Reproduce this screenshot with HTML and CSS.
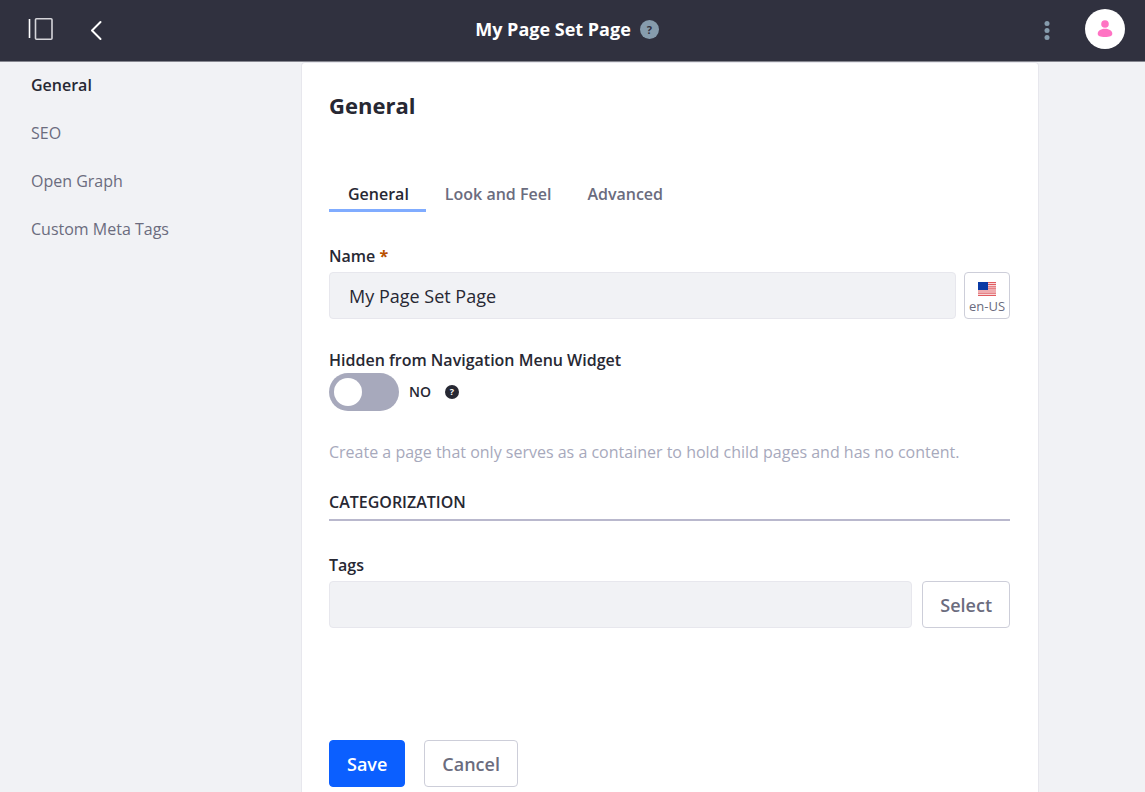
FILE: index.html
```html
<!DOCTYPE html>
<html lang="en-US">
<head>
<meta charset="utf-8">
<meta name="viewport" content="width=device-width, initial-scale=1">
<title>My Page Set Page</title>
<link rel="stylesheet" href="styles.css">
</head>
<body>
<header class="topbar">
  <div class="topbar-start">
    <button class="icon-button" type="button" aria-label="Toggle product menu">
      <svg width="26" height="24" viewBox="0 0 26 24" fill="none" stroke="#fff"><path d="M1.500 1v19" stroke-width="1.600"/><rect x="7.500" y="0.800" width="16.500" height="20.500" rx="1" stroke="#d5d5da" stroke-width="1.600"/></svg>
    </button>
    <a class="icon-button" href="#back" aria-label="Back">
      <svg width="14" height="22" viewBox="0 0 14 22" fill="none" stroke="#fff" stroke-width="2" stroke-linecap="round" stroke-linejoin="round"><path d="M10.500 3 2 11.500 10.500 20"/></svg>
    </a>
  </div>
  <div class="topbar-title">
    <h1 class="title">My Page Set Page</h1>
    <button class="help help-title" type="button" aria-label="Help">?</button>
  </div>
  <div class="topbar-end">
    <button class="icon-button" type="button" aria-label="Options">
      <svg width="6" height="20" viewBox="0 0 6 20" fill="#869cad"><circle cx="3" cy="3.500" r="2.500"/><circle cx="3" cy="10.500" r="2.500"/><circle cx="3" cy="17.500" r="2.500"/></svg>
    </button>
    <button class="avatar" type="button" aria-label="User profile">
      <svg width="16" height="18" viewBox="0 0 16 18" fill="#ff73c3"><circle cx="8" cy="4" r="3.800"/><path d="M8 8.800c4.600 0 7.300 2.400 7.300 5 0 2.500-2.600 3.200-7.300 3.200S.7 16.300.7 13.800c0-2.600 2.700-5 7.300-5z"/></svg>
    </button>
  </div>
</header>
<div class="layout">
  <nav class="sidebar" aria-label="Page settings">
    <a class="side-link side-link-active" href="#general">General</a>
    <a class="side-link" href="#seo">SEO</a>
    <a class="side-link" href="#open-graph">Open Graph</a>
    <a class="side-link" href="#meta-tags">Custom Meta Tags</a>
  </nav>
  <main class="sheet">
    <h2 class="sheet-title">General</h2>
    <nav class="tabs" aria-label="General sections">
      <a class="tab tab-active" href="#tab-general">General</a>
      <a class="tab" href="#look-and-feel">Look and Feel</a>
      <a class="tab" href="#advanced">Advanced</a>
    </nav>
    <form class="form">
      <div class="field">
        <label class="label" for="name">Name <span class="required">*</span></label>
        <div class="row row-name">
          <input class="input" id="name" type="text" value="My Page Set Page">
          <button class="locale" type="button">
            <svg width="18" height="14" viewBox="0 0 18 14" aria-hidden="true"><path fill="#fff" d="M0 0h18v14H0z"/><path stroke="#e05b60" stroke-width="1.200" d="M0 .6h18M0 2.700h18M0 4.800h18M0 6.900h18M0 9h18M0 11.100h18M0 13.300h18"/><path fill="#0a3aa5" d="M0 0h10v8H0z"/></svg>
            <span>en-US</span>
          </button>
        </div>
      </div>
      <div class="field field-toggle">
        <label class="label" for="hidden">Hidden from Navigation Menu Widget</label>
        <div class="row row-toggle">
          <input class="toggle" id="hidden" type="checkbox" role="switch">
          <span class="toggle-state">NO</span>
          <button class="help help-field" type="button" aria-label="Help">?</button>
        </div>
      </div>
      <p class="description">Create a page that only serves as a container to hold child pages and has no content.</p>
      <h3 class="section-title">CATEGORIZATION</h3>
      <div class="field">
        <label class="label" for="tags">Tags</label>
        <div class="row row-tags">
          <input class="input" id="tags" type="text">
          <button class="button" type="button">Select</button>
        </div>
      </div>
      <div class="actions">
        <button class="button button-primary" type="submit">Save</button>
        <button class="button" type="button">Cancel</button>
      </div>
    </form>
  </main>
</div>
</body>
</html>
```
FILE: styles.css
```css
* {
  box-sizing: border-box;
}

body {
  display: flex;
  flex-direction: column;
  min-height: 100vh;
  margin: 0;
  background: #f1f2f5;
  color: #272833;
  font-family: "Segoe UI", "Open Sans", "Noto Sans", sans-serif;
  font-size: 16px;
  line-height: 24px;
}

button,
input {
  font: inherit;
}

button {
  padding: 0;
  border: 0;
  background: none;
  cursor: pointer;
}

a {
  color: inherit;
  text-decoration: none;
}

svg {
  display: block;
}

.topbar {
  display: grid;
  grid-template-columns: 1fr auto 1fr;
  align-items: center;
  height: 62px;
  padding: 0 20px 4px 9px;
  border-bottom: 1px solid #85868f;
  background: #30313f;
  color: #fff;
}

.topbar-start {
  display: flex;
  align-items: center;
  gap: 36px;
  padding-left: 19px;
}

.topbar-title {
  display: flex;
  align-items: center;
  gap: 9px;
}

.topbar-end {
  display: flex;
  align-items: center;
  justify-content: flex-end;
  gap: 35px;
}

.icon-button {
  display: block;
  padding-top: 2px;
}

.title {
  margin: 0;
  font-size: 18px;
  font-weight: 700;
  line-height: 24px;
}

.help {
  display: flex;
  align-items: center;
  justify-content: center;
  border-radius: 50%;
  font-weight: 700;
}

.help-title {
  width: 19px;
  height: 19px;
  margin-top: 2px;
  background: #869cad;
  color: #30313f;
  font-size: 11px;
}

.help-field {
  width: 14px;
  height: 14px;
  background: #272833;
  color: #fff;
  font-size: 9px;
}

.avatar {
  display: flex;
  align-items: center;
  justify-content: center;
  width: 40px;
  height: 40px;
  border-radius: 50%;
  background: #fff;
}

.layout {
  display: grid;
  flex: 1;
  grid-template-columns: 301px 1fr;
  padding-right: 106px;
}

.sidebar {
  display: flex;
  flex-direction: column;
  align-items: flex-start;
  gap: 24px;
  padding: 11px 31px;
}

.side-link {
  color: #6b6c7e;
}

.side-link-active {
  color: #272833;
  font-weight: 600;
}

.sheet {
  padding: 24px 28px 0 27px;
  border: 1px solid #e7e7ed;
  border-bottom: 0;
  border-radius: 4px 4px 0 0;
  background: #fff;
}

.sheet-title {
  margin: 0;
  font-size: 22px;
  font-weight: 700;
  line-height: 36px;
}

.tabs {
  display: flex;
  margin: 59px 0 32px;
}

.tab {
  padding: 0 17px 3px 19px;
  border-bottom: 3px solid transparent;
  color: #6b6c7e;
  font-weight: 600;
}

.tab-active {
  border-color: #80acff;
  color: #272833;
}

.label {
  display: block;
  margin-bottom: 4px;
  font-weight: 600;
}

.required {
  color: #b95000;
  font-weight: 700;
}

.row {
  display: flex;
  align-items: center;
}

.row-name {
  gap: 8px;
}

.row-toggle,
.row-tags {
  gap: 10px;
}

.input {
  flex: 1;
  min-width: 0;
  height: 47px;
  padding: 0 19px;
  border: 1px solid #e7e7ed;
  border-radius: 4px;
  background: #f1f2f5;
  color: #272833;
  font-size: 18px;
}

.locale {
  display: flex;
  flex-direction: column;
  align-items: center;
  justify-content: center;
  gap: 2px;
  width: 46px;
  height: 47px;
  padding-top: 5px;
  border: 1px solid #cdced9;
  border-radius: 4px;
  background: #fff;
  color: #6b6c7e;
  font-size: 13px;
  line-height: 16px;
}

.field-toggle {
  margin-top: 29px;
}

.field-toggle .label {
  margin-bottom: 1px;
}

.toggle {
  display: flex;
  align-items: center;
  width: 70px;
  height: 38px;
  margin: 0;
  padding: 0 5px;
  appearance: none;
  border-radius: 19px;
  background: #a7a9bc;
  cursor: pointer;
}

.toggle::before {
  width: 28px;
  height: 28px;
  border-radius: 50%;
  background: #fff;
  content: "";
}

.toggle:checked {
  justify-content: flex-end;
  background: #0b5fff;
}

.toggle-state {
  margin-right: 4px;
  font-size: 14px;
  font-weight: 600;
}

.description {
  margin: 29px 0 26px;
  color: #a7a9bc;
}

.section-title {
  margin: 0 0 32px;
  padding-bottom: 5px;
  border-bottom: 2px solid #b9b8cd;
  font-size: 16px;
  font-weight: 600;
  line-height: 24px;
}

.button {
  height: 47px;
  padding: 0 17px;
  border: 1px solid #cdced9;
  border-radius: 4px;
  background: #fff;
  color: #6b6c7e;
  font-size: 18px;
  font-weight: 600;
}

.button-primary {
  border-color: #0b5fff;
  background: #0b5fff;
  color: #fff;
}

.actions {
  display: flex;
  gap: 19px;
  margin-top: 112px;
}
```
